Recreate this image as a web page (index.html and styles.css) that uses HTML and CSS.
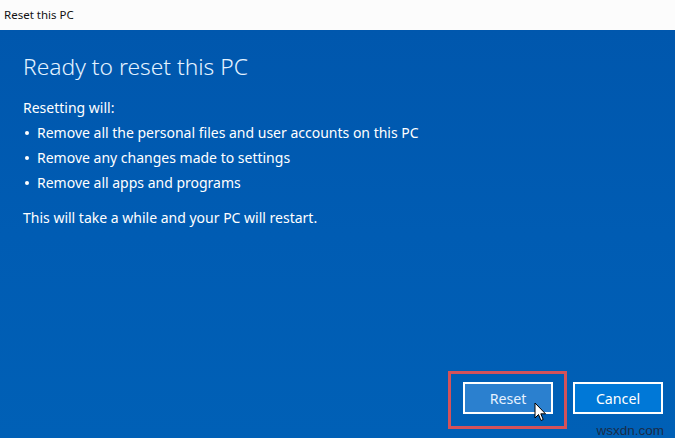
FILE: index.html
```html
<!DOCTYPE html>
<html>
<head>
<meta charset="utf-8">
<link rel="stylesheet" href="styles.css">
</head>
<body>
<div class="window">
  <div class="titlebar">Reset this PC</div>
  <div class="panel">
    <div class="content">
      <h1 class="heading">Ready to reset this PC</h1>
      <p class="intro">Resetting will:</p>
      <ul class="list">
        <li>Remove all the personal files and user accounts on this PC</li>
        <li>Remove any changes made to settings</li>
        <li>Remove all apps and programs</li>
      </ul>
      <p class="note">This will take a while and your PC will restart.</p>
    </div>
    <div class="actions">
      <div class="btn-wrap">
        <span class="highlight"></span>
        <button class="btn btn-hover">Reset</button>
        <svg class="cursor" width="13" height="20" viewBox="0 0 13 20"><path d="M1 1 L1 16 L4.5 12.5 L7 18.5 L9.2 17.5 L6.8 11.8 L11.5 11.8 Z" fill="#fff" stroke="#000" stroke-width="1" stroke-linejoin="round"/></svg>
      </div>
      <button class="btn">Cancel</button>
    </div>
    <span class="watermark">wsxdn.com</span>
  </div>
</div>
</body>
</html>
```
FILE: styles.css
```css
html, body {
  margin: 0;
  padding: 0;
}
body {
  width: 675px;
  height: 438px;
  overflow: hidden;
  font-family: "Noto Sans", "Open Sans", sans-serif;
}
.window {
  width: 675px;
  height: 438px;
  display: flex;
  flex-direction: column;
}
.titlebar {
  height: 30px;
  flex: none;
  background: #fcfcfc;
  color: #111;
  font-size: 11.5px;
  line-height: 30px;
  padding-left: 4px;
  box-sizing: border-box;
}
.panel {
  position: relative;
  flex: 1;
  display: flex;
  flex-direction: column;
  background: linear-gradient(180deg, #0057ad 0%, #005cb3 50%, #0060b6 100%);
  color: #fff;
}
.content {
  padding: 20px 0 0 23px;
}
.heading {
  margin: 0;
  font-weight: 300;
  font-size: 22.8px;
  line-height: 34px;
  color: #e3f2ff;
}
.intro, .note, .list li {
  font-size: 14px;
  line-height: 25px;
}
.intro {
  margin: 11px 0 0 0;
}
.list {
  margin: 0;
  padding: 0;
  list-style: none;
}
.list li {
  position: relative;
  padding-left: 14px;
}
.list li::before {
  content: "";
  position: absolute;
  left: 2px;
  top: 11px;
  width: 4px;
  height: 4px;
  border-radius: 50%;
  background: #fff;
}
.note {
  margin: 10px 0 0 0;
}
.actions {
  margin-top: auto;
  display: flex;
  justify-content: flex-end;
  gap: 20px;
  padding: 0 12px 24px 0;
}
.btn-wrap {
  position: relative;
  display: flex;
}
.btn {
  width: 90px;
  height: 32px;
  box-sizing: border-box;
  border: 2px solid #fff;
  background: #0078d7;
  color: #fff;
  font-family: "Noto Sans", "Open Sans", sans-serif;
  font-size: 14.2px;
  padding: 0;
}
.btn-hover {
  background: #2b80cf;
  color: #e6f2ff;
}
.highlight {
  position: absolute;
  left: -15px;
  top: -11px;
  width: 119px;
  height: 58px;
  box-sizing: border-box;
  border: 3px solid #d4525a;
}
.cursor {
  position: absolute;
  left: 71px;
  top: 20px;
}
.watermark {
  position: absolute;
  right: 11px;
  bottom: 0px;
  font-family: "Liberation Sans", Arial, sans-serif;
  font-size: 13.5px;
  color: #1a2c48;
  line-height: 14px;
}
```
